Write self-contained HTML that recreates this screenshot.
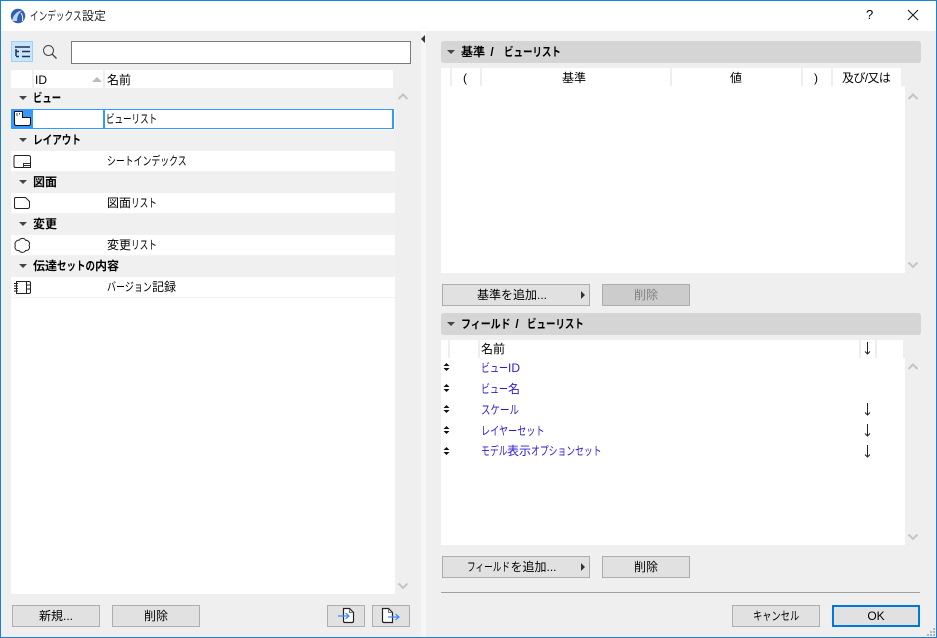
<!DOCTYPE html>
<html lang="ja"><head><meta charset="utf-8"><style>
html,body{margin:0;padding:0}
body{width:937px;height:638px;overflow:hidden;position:relative;background:#efefef;font:12px/16px "Liberation Sans","Noto Sans CJK JP",sans-serif;color:#000}
div,svg,span.t{position:absolute}
.t{white-space:nowrap}
.b{font-weight:bold}
i{display:inline-block;font-style:normal;transform-origin:0 50%;white-space:nowrap}
.btn{background:#e1e1e1;border:1px solid #adadad;box-sizing:border-box;height:22px;text-align:center;line-height:21px;white-space:nowrap}
.g{left:11px;width:384px;height:21px;background:#f0f0f0}
.r{left:11px;width:384px;height:20px;background:#fff;border-bottom:1px solid #f3f3f3}
.tri{width:0;height:0;border-left:4px solid transparent;border-right:4px solid transparent;border-top:4px solid #444}
.s{width:2px;background:#eee}
.bl{color:#2a1ccc;left:481px}
</style></head><body>
<div style="left:0;top:0;width:937px;height:31px;background:#fff"></div>
<svg style="left:10px;top:8px" width="16" height="16" viewBox="0 0 16 16"><circle cx="8" cy="8" r="7.2" fill="#2f5fb0"/><path d="M2 13C3 7 7 3 12 2.500 9 5 7 8 7 13Z" fill="#bcd4f0"/><path d="M11 5c1.500 2 2 5 1.500 8" stroke="#fff" fill="none"/></svg>
<span class="t" style="left:30px;top:8px;color:#222"><i style="width:52px;transform:scaleX(.72)">インデックス</i>設定</span>
<span class="t" style="left:866px;top:7px;font-size:13px">?</span>
<svg style="left:907px;top:9px" width="12" height="12"><path d="M1 1L11 11M11 1L1 11" stroke="#111" fill="none"/></svg>

<div style="left:421px;top:31px;width:5px;height:606px;background:#f6f6f6"></div>
<div style="left:421px;top:35px;width:0;height:0;border-top:4px solid transparent;border-bottom:4px solid transparent;border-right:4px solid #333"></div>

<div style="left:11px;top:41px;width:22px;height:21px;box-sizing:border-box;background:#cce4f7;border:1px solid #99d1ff"></div>
<svg style="left:14px;top:45px" width="17" height="14"><path d="M1 2H16" stroke="#17345c" stroke-width="1.500" fill="none"/><path d="M2 4V11M2 6.500H5M2 11.500H5M8 6.500H16M8 11.500H16" stroke="#17345c" stroke-width="1.500" fill="none"/></svg>
<svg style="left:42px;top:44px" width="16" height="16"><circle cx="6.500" cy="6.500" r="5" stroke="#444" fill="none"/><path d="M10 10L14.500 14.500" stroke="#444" stroke-width="1.300"/></svg>
<div style="left:71px;top:41px;width:340px;height:23px;box-sizing:border-box;background:#fff;border:1px solid #7a7a7a"></div>

<div style="left:11px;top:70px;width:382px;height:18px;background:#fff"></div>
<div class="s" style="left:32px;top:70px;height:18px"></div>
<div class="s" style="left:103px;top:70px;height:18px"></div>
<span class="t" style="left:35px;top:72px">ID</span>
<div style="left:92px;top:77px;width:0;height:0;border-left:5px solid transparent;border-right:5px solid transparent;border-bottom:5px solid #bbb"></div>
<span class="t" style="left:107px;top:72px">名前</span>

<div style="left:11px;top:88px;width:384px;height:506px;background:#fff"></div>

<div class="g" style="top:88px"></div><div class="tri" style="left:19px;top:96px"></div><span class="t b" style="left:33px;top:90px"><i style="width:28px;transform:scaleX(.78)">ビュー</i></span>
<div style="left:11px;top:109px;width:383px;height:20px;background:#3399ff"></div>
<div style="left:33px;top:110px;width:70px;height:18px;background:#fff"></div>
<div style="left:105px;top:110px;width:287px;height:18px;background:#fff"></div>
<svg style="left:13px;top:110px" width="19" height="18"><path d="M1.500 1.500H9.500V7.500H17.500V13.500Q17.500 15.500 15.500 15.500H3.500Q1.500 15.500 1.500 13.500Z" fill="#fff" stroke="#111"/><path d="M4 3V6M6.500 3V4.500" stroke="#444"/></svg>
<span class="t" style="left:106px;top:111px"><i style="width:51px;transform:scaleX(.71)">ビューリスト</i></span>

<div class="g" style="top:130px"></div><div class="tri" style="left:19px;top:138px"></div><span class="t b" style="left:33px;top:132px"><i style="width:48px;transform:scaleX(.8)">レイアウト</i></span>
<div class="r" style="top:151px"></div>
<svg style="left:13px;top:154px" width="19" height="15"><path d="M2.500 1.500H15.500Q17.500 1.500 17.500 3.500V13.500H2.500Q1 13.500 1 12V3Q1 1.500 2.500 1.500Z" fill="#fff" stroke="#222"/><path d="M10.500 13.500V9.500H17.500M11 11.500H17" stroke="#333" fill="none"/></svg>
<span class="t" style="left:107px;top:153px"><i style="width:80px;transform:scaleX(.74)">シートインデックス</i></span>

<div class="g" style="top:172px"></div><div class="tri" style="left:19px;top:180px"></div><span class="t b" style="left:33px;top:174px">図面</span>
<div class="r" style="top:193px"></div>
<svg style="left:13px;top:196px" width="18" height="14"><path d="M3 1.500H12.500L16.500 5.500V10.500Q16.500 12.500 14.500 12.500H3Q1.500 12.500 1.500 11V3Q1.500 1.500 3 1.500Z" fill="#fff" stroke="#222"/></svg>
<span class="t" style="left:107px;top:195px">図面<i style="width:26px;transform:scaleX(.72)">リスト</i></span>

<div class="g" style="top:214px"></div><div class="tri" style="left:19px;top:222px"></div><span class="t b" style="left:33px;top:216px">変更</span>
<div class="r" style="top:235px"></div>
<svg style="left:13px;top:237px" width="19" height="17"><path d="M6.500 3C7.500 .8 11.500 .8 12.500 3.200C15.500 3 17.500 6 16 8.500C17.500 11 15.500 14 12.500 13.500C11.500 16 7.500 16 6 13.500C3.500 14 1 11.500 2.300 8.500C1 6 3.500 3 6.500 3Z" fill="#fff" stroke="#222"/></svg>
<span class="t" style="left:107px;top:237px">変更<i style="width:26px;transform:scaleX(.72)">リスト</i></span>

<div class="g" style="top:256px"></div><div class="tri" style="left:19px;top:264px"></div><span class="t b" style="left:33px;top:258px">伝達<i style="width:38px;transform:scaleX(.79)">セットの</i>内容</span>
<div class="r" style="top:277px"></div>
<svg style="left:13px;top:280px" width="19" height="15"><path d="M3.500 1.500H16Q17.500 1.500 17.500 3V12Q17.500 13.500 16 13.500H3.500ZM13.500 1.500V13.500M1 3.500H5M1 6H5M1 8.500H5M1 11H5M14 5H17M14 9H17" fill="#fff" stroke="#222"/></svg>
<span class="t" style="left:107px;top:279px"><i style="width:45px;transform:scaleX(.75)">バージョン</i>記録</span>

<svg style="left:397px;top:92px" width="12" height="10"><path d="M1.500 7L6 2.500L10.500 7" stroke="#c4c4c4" stroke-width="2" fill="none"/></svg>
<svg style="left:397px;top:581px" width="12" height="10"><path d="M1.500 2.500L6 7L10.500 2.500" stroke="#c4c4c4" stroke-width="2" fill="none"/></svg>

<div class="btn" style="left:12px;top:605px;width:88px">新規...</div>
<div class="btn" style="left:112px;top:605px;width:88px">削除</div>
<div class="btn" style="left:327px;top:605px;width:38px"></div>
<div class="btn" style="left:372px;top:605px;width:38px"></div>
<svg style="left:337px;top:606px" width="24" height="20"><path d="M6.500 2.500H12.500L16.500 6.500V15Q16.500 16.500 15 16.500H8Q6.500 16.500 6.500 15Z" fill="#fff" stroke="#222" stroke-width="1.200"/><path d="M12.500 3V6.500H16" fill="none" stroke="#777"/><path d="M1 10H12M8.500 7L12 10L8.500 13" stroke="#3d8cf5" stroke-width="1.200" fill="none"/></svg>
<svg style="left:381px;top:606px" width="26" height="20"><path d="M1.500 2.500H7.500L11.500 6.500V16.500H3Q1.500 16.500 1.500 15Z" fill="#fff" stroke="#222" stroke-width="1.200"/><path d="M7.500 3V6.500H11" fill="none" stroke="#777"/><path d="M7 11H18M14.500 8L18 11L14.500 14" stroke="#3d8cf5" stroke-width="1.200" fill="none"/></svg>

<div style="left:441px;top:41px;width:480px;height:22px;background:#d5d5d5;border-radius:3px"></div>
<div class="tri" style="left:447px;top:50px"></div>
<span class="t b" style="left:461px;top:44px;word-spacing:2px">基準 /</span>
<span class="t b" style="left:504px;top:44px"><i style="width:57px;transform:scaleX(.79)">ビューリスト</i></span>
<div style="left:441px;top:68px;width:460px;height:18px;background:#fff"></div>
<div style="left:441px;top:86px;width:464px;height:187px;background:#fff"></div>
<div class="s" style="left:450px;top:68px;height:18px"></div>
<div class="s" style="left:480px;top:68px;height:18px"></div>
<div class="s" style="left:670px;top:68px;height:18px"></div>
<div class="s" style="left:801px;top:68px;height:18px"></div>
<div class="s" style="left:831px;top:68px;height:18px"></div>
<div class="s" style="left:901px;top:68px;height:18px"></div>
<span class="t" style="left:463px;top:70px">(</span>
<span class="t" style="left:562px;top:70px">基準</span>
<span class="t" style="left:730px;top:70px">値</span>
<span class="t" style="left:814px;top:70px">)</span>
<span class="t" style="left:842px;top:70px;letter-spacing:-.6px">及び/又は</span>
<svg style="left:907px;top:92px" width="12" height="10"><path d="M1.500 7L6 2.500L10.500 7" stroke="#c4c4c4" stroke-width="2" fill="none"/></svg>
<svg style="left:907px;top:260px" width="12" height="10"><path d="M1.500 2.500L6 7L10.500 2.500" stroke="#c4c4c4" stroke-width="2" fill="none"/></svg>

<div class="btn" style="left:442px;top:284px;width:148px;padding-right:8px">基準を追加...</div>
<div style="left:581px;top:291px;width:0;height:0;border-top:4px solid transparent;border-bottom:4px solid transparent;border-left:4px solid #333"></div>
<div class="btn" style="left:602px;top:284px;width:88px;background:#ccc;color:#7f7f7f">削除</div>

<div style="left:441px;top:313px;width:480px;height:22px;background:#d5d5d5;border-radius:3px"></div>
<div class="tri" style="left:447px;top:322px"></div>
<span class="t b" style="left:461px;top:316px;word-spacing:1px"><i style="width:50px;transform:scaleX(.83)">フィールド</i> /</span>
<span class="t b" style="left:527px;top:316px"><i style="width:57px;transform:scaleX(.79)">ビューリスト</i></span>
<div style="left:441px;top:340px;width:464px;height:205px;background:#fff"></div>
<div class="s" style="left:448px;top:340px;height:18px"></div>
<div class="s" style="left:478px;top:340px;height:18px"></div>
<div class="s" style="left:859px;top:340px;height:18px"></div>
<div class="s" style="left:875px;top:340px;height:18px"></div>
<div class="s" style="left:903px;top:340px;height:18px"></div>
<span class="t" style="left:481px;top:341px">名前</span>
<svg style="left:864px;top:342px" width="7" height="13"><path d="M3.500 0V12M1 9.500L3.500 12L6 9.500" stroke="#222" fill="none"/></svg>

<span class="t bl" style="top:360px"><i style="width:27px;transform:scaleX(.75)">ビュー</i>ID</span>
<span class="t bl" style="top:381px"><i style="width:27px;transform:scaleX(.75)">ビュー</i>名</span>
<span class="t bl" style="top:402px"><i style="width:38px;transform:scaleX(.79)">スケール</i></span>
<span class="t bl" style="top:423px"><i style="width:64px;transform:scaleX(.76)">レイヤーセット</i></span>
<span class="t bl" style="top:443px"><i style="width:26px;transform:scaleX(.735)">モデル</i>表示<i style="width:71px;transform:scaleX(.735)">オプションセット</i></span>

<svg style="left:443px;top:363px" width="7" height="98" fill="#111"><path d="M3.500 0L6.500 3H.5ZM3.500 8L6.500 5H.5Z"/><path transform="translate(0,21)" d="M3.500 0L6.500 3H.5ZM3.500 8L6.500 5H.5Z"/><path transform="translate(0,42)" d="M3.500 0L6.500 3H.5ZM3.500 8L6.500 5H.5Z"/><path transform="translate(0,63)" d="M3.500 0L6.500 3H.5ZM3.500 8L6.500 5H.5Z"/><path transform="translate(0,84)" d="M3.500 0L6.500 3H.5ZM3.500 8L6.500 5H.5Z"/></svg>
<svg style="left:864px;top:403px" width="7" height="13"><path d="M3.500 0V12M1 9.500L3.500 12L6 9.500" stroke="#222" fill="none"/></svg>
<svg style="left:864px;top:424px" width="7" height="13"><path d="M3.500 0V12M1 9.500L3.500 12L6 9.500" stroke="#222" fill="none"/></svg>
<svg style="left:864px;top:445px" width="7" height="13"><path d="M3.500 0V12M1 9.500L3.500 12L6 9.500" stroke="#222" fill="none"/></svg>
<svg style="left:907px;top:362px" width="12" height="10"><path d="M1.500 7L6 2.500L10.500 7" stroke="#c4c4c4" stroke-width="2" fill="none"/></svg>
<svg style="left:907px;top:532px" width="12" height="10"><path d="M1.500 2.500L6 7L10.500 2.500" stroke="#c4c4c4" stroke-width="2" fill="none"/></svg>

<div class="btn" style="left:442px;top:556px;width:148px;padding-right:8px"><i style="width:43px;transform:scaleX(.72)">フィールド</i>を追加...</div>
<div style="left:581px;top:563px;width:0;height:0;border-top:4px solid transparent;border-bottom:4px solid transparent;border-left:4px solid #333"></div>
<div class="btn" style="left:602px;top:556px;width:88px">削除</div>
<div style="left:441px;top:592px;width:479px;height:1px;background:#a0a0a0"></div>
<div class="btn" style="left:732px;top:605px;width:88px"><i style="width:46px;transform:scaleX(.77)">キャンセル</i></div>
<div class="btn" style="left:832px;top:605px;width:88px;border:2px solid #0078d7;line-height:18px">OK</div>

<svg style="left:926px;top:627px" width="10" height="10" fill="#b5b5b5"><rect x="7" y="1" width="2" height="2"/><rect x="4" y="4" width="2" height="2"/><rect x="7" y="4" width="2" height="2"/><rect x="1" y="7" width="2" height="2"/><rect x="4" y="7" width="2" height="2"/><rect x="7" y="7" width="2" height="2"/></svg>
<div style="left:0;top:0;width:935px;height:636px;border:1px solid #1b80d8"></div>
</body></html>
